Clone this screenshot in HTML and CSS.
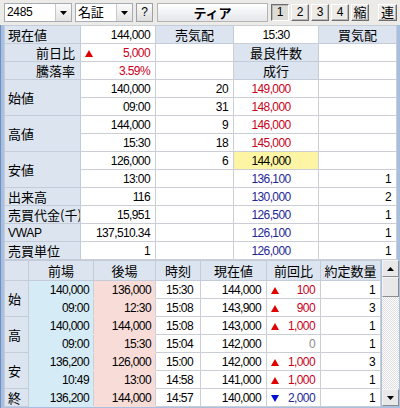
FILE: index.html
```html
<!DOCTYPE html>
<html lang="ja">
<head>
<meta charset="utf-8">
<title>2485 ティア</title>
<link rel="stylesheet" href="styles.css">
</head>
<body>
<div class="toolbar">
  <div class="combo code"><span class="ctext">2485</span><span class="cbtn"><svg viewBox="0 0 7 4" width="7" height="4"><path d="M0 0H7L3.5 4Z"/></svg></span></div>
  <div class="combo mkt"><span class="ctext jp">名証</span><span class="cbtn"><svg viewBox="0 0 7 4" width="7" height="4"><path d="M0 0H7L3.5 4Z"/></svg></span></div>
  <div class="qbtn">?</div>
  <div class="title jp">ティア</div>
  <div class="pages">
    <span class="pb on">1</span><span class="pb">2</span><span class="pb">3</span><span class="pb">4</span><span class="pb jp">縮</span>
  </div>
  <span class="pb ren jp">連</span>
</div>
<div class="main">
  <table class="quote">
    <colgroup><col class="q1"><col class="q2"><col class="q3"><col class="q4"><col class="q5"></colgroup>
    <tr><th class="lbl">現在値</th><td class="num">144,000</td><th class="hd">売気配</th><td class="ctr">15:30</td><th class="hd">買気配</th></tr>
    <tr><th class="lbl r">前日比</th><td class="num up"><svg class="tri" viewBox="0 0 8 7"><path d="M4 0L8 7H0Z"/></svg>5,000</td><td></td><th class="hd">最良件数</th><td></td></tr>
    <tr><th class="lbl r">騰落率</th><td class="num up">3.59%</td><td></td><th class="hd">成行</th><td></td></tr>
    <tr><th class="lbl" rowspan="2">始値</th><td class="num">140,000</td><td class="num">20</td><td class="px up">149,000</td><td></td></tr>
    <tr><td class="num">09:00</td><td class="num">31</td><td class="px up">148,000</td><td></td></tr>
    <tr><th class="lbl" rowspan="2">高値</th><td class="num">144,000</td><td class="num">9</td><td class="px up">146,000</td><td></td></tr>
    <tr><td class="num">15:30</td><td class="num">18</td><td class="px up">145,000</td><td></td></tr>
    <tr><th class="lbl" rowspan="2">安値</th><td class="num">126,000</td><td class="num">6</td><td class="px cur">144,000</td><td></td></tr>
    <tr><td class="num">13:00</td><td></td><td class="px dn">136,100</td><td class="num">1</td></tr>
    <tr><th class="lbl">出来高</th><td class="num">116</td><td></td><td class="px dn">130,000</td><td class="num">2</td></tr>
    <tr><th class="lbl">売買代金(千)</th><td class="num">15,951</td><td></td><td class="px dn">126,500</td><td class="num">1</td></tr>
    <tr><th class="lbl lat">VWAP</th><td class="num">137,510.34</td><td></td><td class="px dn">126,100</td><td class="num">1</td></tr>
    <tr><th class="lbl">売買単位</th><td class="num">1</td><td></td><td class="px dn">126,000</td><td class="num">1</td></tr>
  </table>
  <div class="lower">
    <table class="ticks">
      <colgroup><col class="t1"><col class="t2"><col class="t3"><col class="t4"><col class="t5"><col class="t6"><col class="t7"></colgroup>
      <tr class="hdr"><th class="hd"></th><th class="hd">前場</th><th class="hd">後場</th><th class="hd">時刻</th><th class="hd">現在値</th><th class="hd">前回比</th><th class="hd">約定数量</th></tr>
      <tr><th class="lbl" rowspan="2">始</th><td class="am">140,000</td><td class="pm">136,000</td><td class="tm">15:30</td><td class="num">144,000</td><td class="num up"><svg class="tri" viewBox="0 0 8 7"><path d="M4 0L8 7H0Z"/></svg>100</td><td class="num">1</td></tr>
      <tr><td class="am">09:00</td><td class="pm">12:30</td><td class="tm">15:08</td><td class="num">143,900</td><td class="num up"><svg class="tri" viewBox="0 0 8 7"><path d="M4 0L8 7H0Z"/></svg>900</td><td class="num">3</td></tr>
      <tr><th class="lbl" rowspan="2">高</th><td class="am">140,000</td><td class="pm">144,000</td><td class="tm">15:08</td><td class="num">143,000</td><td class="num up"><svg class="tri" viewBox="0 0 8 7"><path d="M4 0L8 7H0Z"/></svg>1,000</td><td class="num">1</td></tr>
      <tr><td class="am">09:00</td><td class="pm">15:30</td><td class="tm">15:04</td><td class="num">142,000</td><td class="num zero">0</td><td class="num">1</td></tr>
      <tr><th class="lbl" rowspan="2">安</th><td class="am">136,200</td><td class="pm">126,000</td><td class="tm">15:00</td><td class="num">142,000</td><td class="num up"><svg class="tri" viewBox="0 0 8 7"><path d="M4 0L8 7H0Z"/></svg>1,000</td><td class="num">3</td></tr>
      <tr><td class="am">10:49</td><td class="pm">13:00</td><td class="tm">14:58</td><td class="num">141,000</td><td class="num up"><svg class="tri" viewBox="0 0 8 7"><path d="M4 0L8 7H0Z"/></svg>1,000</td><td class="num">1</td></tr>
      <tr><th class="lbl">終</th><td class="am">136,200</td><td class="pm">144,000</td><td class="tm">14:57</td><td class="num">140,000</td><td class="num dn"><svg class="tri down" viewBox="0 0 8 7"><path d="M0 0H8L4 7Z"/></svg>2,000</td><td class="num">1</td></tr>
    </table>
    <div class="vscroll">
      <div class="sbtn"><svg viewBox="0 0 7 4" width="7" height="4"><path d="M3.5 0L7 4H0Z"/></svg></div>
      <div class="thumb"></div>
      <div class="track"></div>
      <div class="sbtn"><svg viewBox="0 0 7 4" width="7" height="4"><path d="M0 0H7L3.5 4Z"/></svg></div>
    </div>
  </div>
</div>
</body>
</html>
```
FILE: styles.css
```css
* { box-sizing: border-box; }
html, body { margin: 0; padding: 0; }
body {
  width: 400px;
  height: 408px;
  overflow: hidden;
  background: #ecebe8;
  font-family: "Liberation Sans", "Noto Sans CJK JP", sans-serif;
  font-size: 12px;
  color: #000;
}
.jp, th {
  font-family: "Noto Sans CJK JP", sans-serif;
  font-size: 13px;
  letter-spacing: 0;
}

/* toolbar */
.toolbar {
  display: flex;
  align-items: center;
  height: 25px;
  padding-left: 4px;
}
.combo {
  display: flex;
  height: 19px;
  background: #fff;
  border: 1px solid #a5acb5;
  margin-right: 3px;
}
.combo.code { width: 68px; }
.combo.mkt { width: 58px; }
.ctext {
  flex: 1;
  padding-left: 2px;
  line-height: 17px;
  letter-spacing: -0.3px;
}
.combo.mkt .ctext { line-height: 16px; }
.cbtn {
  width: 16px;
  display: flex;
  align-items: center;
  justify-content: center;
  background: linear-gradient(#fbfbfb, #e2e2e2);
  border-left: 1px solid #c9c9c9;
}
.cbtn svg, .sbtn svg { fill: #000; }
.qbtn {
  width: 17px;
  height: 19px;
  margin-right: 4px;
  border: 1px solid #a0a0a0;
  background: linear-gradient(#fbfbfb, #dedede);
  text-align: center;
  line-height: 17px;
  font-size: 12px;
}
.title {
  width: 111px;
  height: 19px;
  margin-right: 3px;
  border: 1px solid #b4b4b4;
  background: linear-gradient(#ffffff, #e4e6ea);
  text-align: center;
  font-weight: bold;
  line-height: 17px;
}
.pages { display: flex; gap: 2px; }
.pb {
  display: block;
  width: 18px;
  height: 17px;
  border: 1px solid;
  border-color: #ffffff #6e6e6e #6e6e6e #ffffff;
  box-shadow: inset -1px -1px 0 #b8b8b8;
  text-align: center;
  line-height: 14px;
  font-size: 12px;
}
.pb.jp { font-size: 13px; }
.pb.on {
  border-color: #6e6e6e #ffffff #ffffff #6e6e6e;
  box-shadow: inset 1px 1px 0 #b8b8b8;
  background: #dedcd7;
}
.pb.ren { margin-left: 9px; width: 19px; }

/* main frame */
.main {
  border-left: 1px solid #6f8fc2;
  padding-left: 3px;
  background: #a9bfe0;
  height: 383px;
}
table {
  border-collapse: collapse;
  table-layout: fixed;
}
td, th {
  padding: 0;
  font-weight: normal;
  white-space: nowrap;
  overflow: hidden;
  border: 1px solid #cbcfd5;
  background: #fff;
  line-height: 16px;
  vertical-align: middle;
}
td {
  letter-spacing: -0.6px;
  text-align: right;
  padding-right: 5px;
}
.quote { width: 392px; }
.quote tr { height: 18px; }
.q1 { width: 76px; }
.q2 { width: 75px; }
.q3 { width: 78px; }
.q4 { width: 85px; }
.q5 { width: 78px; }

th.lbl {
  background: #dce5ef;
  text-align: left;
  padding-left: 3px;
  border-color: #c3ccd8;
}
th.lbl.r { text-align: right; padding-right: 5px; }
th.lbl.lat { font-family: "Liberation Sans", sans-serif; font-size: 12px; letter-spacing: -0.3px; }
th.hd {
  background: #dce5ef;
  text-align: center;
  border-color: #c3ccd8;
}
td.ctr { text-align: center; padding-right: 0; }
td.px { text-align: center; padding-right: 10px; }
td.cur { background: #fdf5a3; }
.up { color: #c9001c; }
.dn { color: #1e2894; }
.zero { color: #8a8a8a; }
.tri {
  float: left;
  width: 8px;
  height: 7px;
  margin: 5px 0 0 4px;
  fill: #e00000;
}
.tri.down { fill: #0010d0; }

/* lower table */
.lower { display: flex; }
.ticks { width: 376px; }
.ticks tr { height: 18px; }
.ticks tr.hdr { height: 20px; }
.t1 { width: 24px; }
.t2 { width: 65px; }
.t3 { width: 62px; }
.t4 { width: 45px; }
.t5 { width: 66px; }
.t6 { width: 54px; }
.t7 { width: 60px; }
.ticks th.lbl { padding-left: 3px; }
td.am { background: #d5ebf6; border-top-color: #d5ebf6; border-bottom-color: #d5ebf6; padding-right: 4px; }
td.pm { background: #f7dcd8; border-top-color: #f7dcd8; border-bottom-color: #f7dcd8; padding-right: 4px; }
td.tm { text-align: center; padding-right: 0; padding-left: 3px; }
.ticks .tri { margin-left: 4px; }

.vscroll {
  width: 17px;
  margin-left: 1px;
  display: flex;
  flex-direction: column;
  height: 146px;
  background: #fff;
}
.sbtn {
  height: 17px;
  display: flex;
  align-items: center;
  justify-content: center;
  border: 1px solid;
  border-color: #f4f4f4 #8c8c8c #8c8c8c #f4f4f4;
  background: #e8e8e8;
}
.thumb {
  height: 20px;
  border: 1px solid;
  border-color: #f4f4f4 #8c8c8c #8c8c8c #f4f4f4;
  background: #e8e8e8;
}
.track {
  flex: 1;
  background: repeating-conic-gradient(#dcdcdc 0 25%, #ffffff 0 50%) 0 0 / 2px 2px;
}
```
